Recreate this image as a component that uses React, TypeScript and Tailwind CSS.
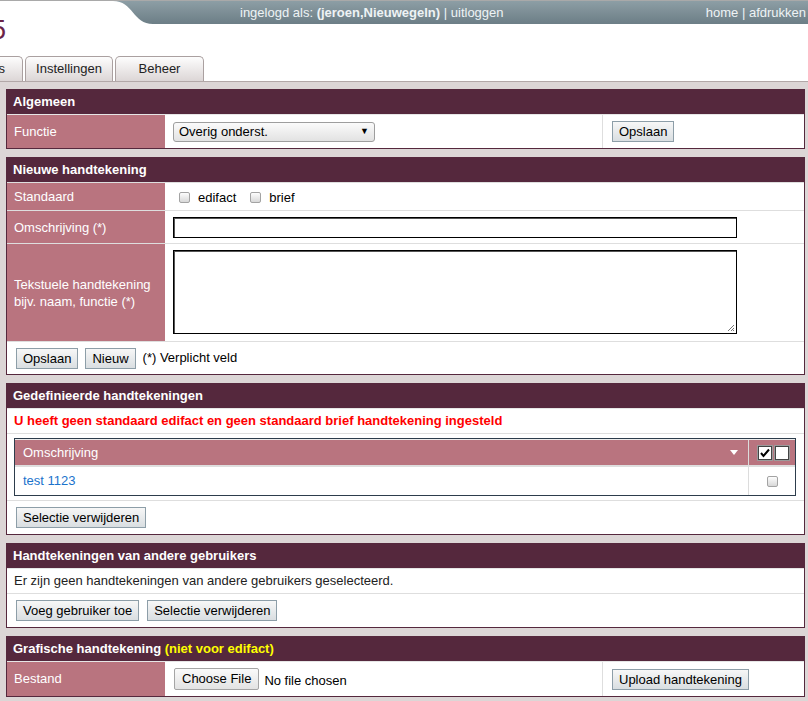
import React from 'react';

const maroon = 'bg-[#55283d]';

function Btn({ children, className = '' }: { children: React.ReactNode; className?: string }) {
  return (
    <span
      className={`inline-flex h-[21px] items-center border border-[#8d9ea8] bg-gradient-to-b from-[#f7f7f7] to-[#d9dee1] px-[6px] text-[13px] leading-none text-black ${className}`}
    >
      {children}
    </span>
  );
}

function Check() {
  return (
    <span className="inline-block h-[11px] w-[11px] rounded-[2px] border border-[#a3a3a3] bg-gradient-to-b from-[#fdfdfd] to-[#d8d8d8]" />
  );
}

function Card({ title, children }: { title: React.ReactNode; children: React.ReactNode }) {
  return (
    <div className="mb-[8px] border border-[#55283d] bg-white">
      <div className={`${maroon} flex h-[24px] items-center pl-[6px] text-[13px] font-bold text-white`}>{title}</div>
      {children}
    </div>
  );
}

function Row({ label, h, children }: { label: React.ReactNode; h: string; children: React.ReactNode }) {
  return (
    <div className={`flex border-t border-[#dedede] ${h}`}>
      <div className="flex w-[158px] shrink-0 items-center bg-[#b9747f] px-[7px] text-[13px] leading-[17px] text-white">
        {label}
      </div>
      <div className="flex flex-1 items-center pl-[8px]">{children}</div>
    </div>
  );
}

export default function App() {
  return (
    <div className="min-h-[701px] w-[808px] overflow-hidden bg-white font-['Liberation_Sans',Arial,sans-serif] text-[13px] text-[#222]">
      {/* Top bar */}
      <div className="flex h-[24px] border-t border-[#a9a9a9]">
        <div className="w-[113px] shrink-0" />
        <svg width="40" height="23" viewBox="0 0 40 23" className="shrink-0">
          <defs>
            <linearGradient id="bar" x1="0" y1="0" x2="0" y2="1">
              <stop offset="0" stopColor="#8d9ea5" />
              <stop offset="1" stopColor="#6c7e86" />
            </linearGradient>
          </defs>
          <path d="M0 0 C 20 0 20 23 40 23 L40 0 Z" fill="url(#bar)" />
        </svg>
        <div className="flex flex-1 items-center justify-between bg-gradient-to-b from-[#8d9ea5] to-[#6c7e86] pl-[87px] pr-[2px] text-[13px] text-[#eef3f5]">
          <span>
            ingelogd als: <b>(jeroen,Nieuwegeln)</b> | uitloggen
          </span>
          <span>home | afdrukken</span>
        </div>
      </div>

      {/* Logo */}
      <div className="flow-root h-[32px]">
        <div className="ml-[-9px] mt-[-9px] text-[27px] leading-[30px] text-[#6b2347]">5</div>
      </div>

      {/* Tabs */}
      <div className="flex h-[26px] items-end gap-[2px] border-b border-[#b2a8a8]">
        {[
          { label: 's', className: 'ml-[-20px] w-[43px] justify-end pr-[17px]' },
          { label: 'Instellingen', className: 'w-[88px] justify-center' },
          { label: 'Beheer', className: 'w-[89px] justify-center' },
        ].map((t) => (
          <div
            key={t.label}
            className={`flex h-[25px] items-center rounded-t-[5px] border border-b-0 border-[#aaa0a0] bg-gradient-to-b from-[#fdfdfd] to-[#dcd6d6] text-[13px] text-[#222] ${t.className}`}
          >
            {t.label}
          </div>
        ))}
      </div>

      {/* Content */}
      <div className="bg-[#dcd6d6] pb-[6px] pl-[6px] pr-[3px] pt-[7px]">
        <Card title="Algemeen">
          <div className="flex h-[34px] border-t border-[#e6e6e6]">
            <div className="flex w-[158px] shrink-0 items-center bg-[#b9747f] px-[7px] text-white">Functie</div>
            <div className="flex w-[438px] items-center border-r border-[#dedede] pl-[8px]">
              <span className="flex h-[20px] w-[202px] items-center justify-between rounded-[3px] border border-[#9e9e9e] bg-gradient-to-b from-[#fbfbfb] to-[#e2e2e2] pl-[5px] pr-[5px] text-black">
                Overig onderst.
                <span className="text-[9px]">▼</span>
              </span>
            </div>
            <div className="flex flex-1 items-center pl-[9px]">
              <Btn>Opslaan</Btn>
            </div>
          </div>
        </Card>

        <Card title="Nieuwe handtekening">
          <Row label="Standaard" h="h-[28px]">
            <span className="flex items-center gap-[8px] pl-[6px] pt-[2px] text-black">
              <Check />
              <span className="mr-[6px]">edifact</span>
              <Check />
              <span>brief</span>
            </span>
          </Row>
          <Row label="Omschrijving (*)" h="h-[33px]">
            <span className="block h-[21px] w-[564px] border border-black bg-white shadow-[inset_1px_1px_0_#555]" />
          </Row>
          <Row
            label={
              <span>
                Tekstuele handtekening
                <br />
                bijv. naam, functie (*)
              </span>
            }
            h="h-[98px]"
          >
            <span className="relative mb-[1px] block h-[84px] w-[564px] border border-black bg-white shadow-[inset_1px_1px_0_#555]">
              <svg className="absolute bottom-[1px] right-[1px]" width="8" height="8" viewBox="0 0 8 8">
                <path d="M7 1 L1 7 M7 4 L4 7 M7 6 L6 7" stroke="#777" strokeWidth="1" />
              </svg>
            </span>
          </Row>
          <div className="flex h-[33px] items-center gap-[7px] border-t border-[#dedede] pl-[9px] text-black">
            <Btn>Opslaan</Btn>
            <Btn>Nieuw</Btn>
            <span>(*) Verplicht veld</span>
          </div>
        </Card>

        <Card title="Gedefinieerde handtekeningen">
          <div className="flex h-[25px] items-center border-t border-[#e6e6e6] pl-[7px] font-bold text-[#f00]">
            U heeft geen standaard edifact en geen standaard brief handtekening ingesteld
          </div>
          <div className="border-t border-[#dedede] pb-[4px] pl-[7px] pr-[8px] pt-[4px]">
            <div className="border border-[#2d3d4c]">
              <div className="flex h-[26px] border-t border-[#ececec] bg-[#b9747f]">
                <div className="flex flex-1 items-center justify-between pl-[8px] pr-[10px] text-white">
                  Omschrijving
                  <svg width="8" height="5" viewBox="0 0 8 5">
                    <path d="M0 0 L8 0 L4 5 Z" fill="#fff" />
                  </svg>
                </div>
                <div className="flex w-[47px] items-center gap-[1px] border-l border-[#dcdcdc] pl-[8px]">
                  <svg width="16" height="16" viewBox="0 0 16 16">
                    <rect x="0.5" y="0.5" width="15" height="15" fill="#fff" stroke="#9a9a9a" />
                    <rect x="1.5" y="1.5" width="13" height="13" fill="#fff" stroke="#444" />
                    <path d="M4 8 L6.5 11 L12 4.5" stroke="#000" strokeWidth="2" fill="none" />
                  </svg>
                  <svg width="16" height="16" viewBox="0 0 16 16">
                    <rect x="0.5" y="0.5" width="15" height="15" fill="#fff" stroke="#9a9a9a" />
                    <rect x="1.5" y="1.5" width="13" height="13" fill="#fff" stroke="#444" />
                  </svg>
                </div>
              </div>
              <div className="flex h-[30px] border-t-2 border-[#dedede]">
                <div className="flex flex-1 items-center pl-[8px] text-[#1b73cc]">test 1123</div>
                <div className="flex w-[47px] items-center justify-center border-l border-[#dcdcdc]">
                  <Check />
                </div>
              </div>
            </div>
          </div>
          <div className="flex h-[34px] items-center border-t border-[#dedede] pl-[9px]">
            <Btn>Selectie verwijderen</Btn>
          </div>
        </Card>

        <Card title="Handtekeningen van andere gebruikers">
          <div className="flex h-[25px] items-center border-t border-[#e6e6e6] pl-[7px]">
            Er zijn geen handtekeningen van andere gebruikers geselecteerd.
          </div>
          <div className="flex h-[34px] items-center gap-[8px] border-t border-[#dedede] pl-[9px]">
            <Btn>Voeg gebruiker toe</Btn>
            <Btn>Selectie verwijderen</Btn>
          </div>
        </Card>

        <Card
          title={
            <span>
              Grafische handtekening <span className="text-[#ffff00]">(niet voor edifact)</span>
            </span>
          }
        >
          <div className="flex h-[35px] border-t border-[#e6e6e6]">
            <div className="flex w-[158px] shrink-0 items-center bg-[#b9747f] px-[7px] text-white">Bestand</div>
            <div className="flex w-[438px] items-center gap-[5px] border-r border-[#dedede] pl-[9px] text-black">
              <span className="inline-flex h-[22px] items-center rounded-[2px] border border-[#a5a5a5] bg-gradient-to-b from-[#fafafa] to-[#e3e3e3] px-[7px]">
                Choose File
              </span>
              <span className="pt-[4px]">No file chosen</span>
            </div>
            <div className="flex flex-1 items-center pl-[9px]">
              <Btn>Upload handtekening</Btn>
            </div>
          </div>
        </Card>
      </div>
    </div>
  );
}
